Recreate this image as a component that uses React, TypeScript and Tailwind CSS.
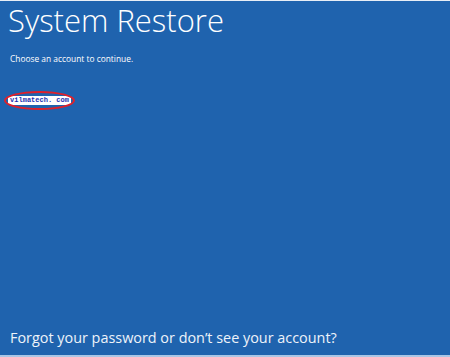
import React from "react";

export default function App() {
  return (
    <div
      className="w-[450px] h-[357px] bg-[#1f63ae] flex flex-col text-white border-t border-t-[#e8eef6] border-b-2 border-b-[#a9c6e6]"
      style={{ fontFamily: '"Open Sans", "Noto Sans", sans-serif' }}
    >
      <div className="pl-[8px] text-[31px] font-light leading-[38px]">
        System Restore
      </div>
      <div className="pl-[10px] mt-[14px] text-[8.4px] leading-[11px]">
        Choose an account to continue.
      </div>
      <div className="pl-[4px] mt-[27px]">
        <div className="relative w-[71px] h-[19px] flex items-center justify-center">
          <div className="absolute inset-0 rounded-[50%] border-[2.5px] border-[#e0202a]" />
          <div
            className="bg-white text-[#1a2fb0] text-[7px] leading-[9px] px-[2px] font-bold"
            style={{ fontFamily: '"Liberation Mono", monospace' }}
          >
            vilmatech. com
          </div>
        </div>
      </div>
      <div className="flex-1" />
      <div className="pl-[10px] pb-[7px] text-[14.4px] leading-[20px] text-[#eef3fa]">
        Forgot your password or don’t see your account?
      </div>
    </div>
  );
}
